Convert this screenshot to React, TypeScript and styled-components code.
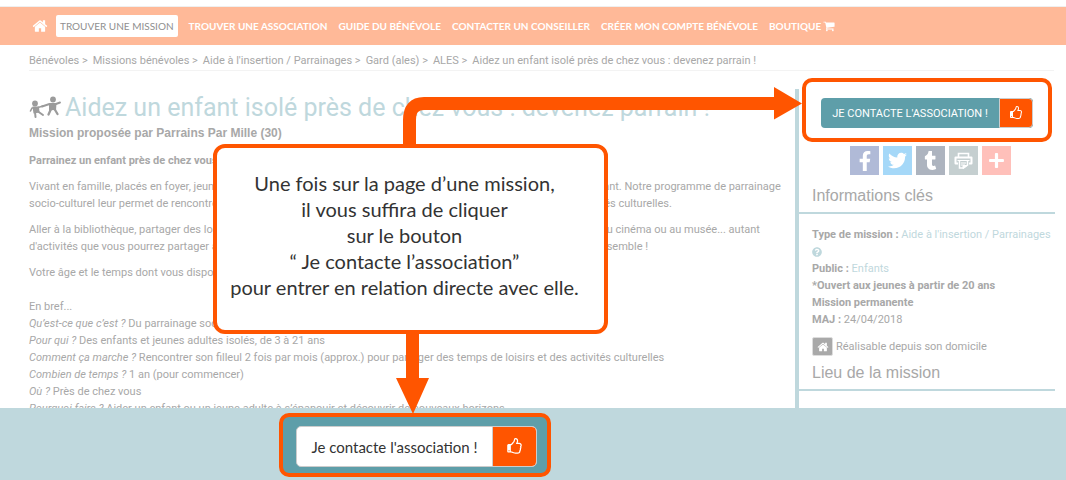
import React from "react";
import styled, { createGlobalStyle } from "styled-components";
import { FaFacebookF, FaTwitter, FaTumblr, FaPlus, FaQuestionCircle } from "react-icons/fa";

const ORANGE = "#ff5500";
const TEAL = "#5e9ea9";
const PALE_TEAL = "#bfd8dd";
const GREY = "#a8a8a8";
const LATO = `Lato, "Open Sans", sans-serif`;
const ROBOTO = `Roboto, "Open Sans", sans-serif`;
const ARIAL = `"Liberation Sans", Arial, sans-serif`;

const GlobalStyle = createGlobalStyle`
  *, *::before, *::after { box-sizing: border-box; }
  body { margin: 0; background: #fff; }
  a { color: inherit; text-decoration: none; }
  button { cursor: pointer; }
`;

const Page = styled.div`
  position: relative;
  display: flex;
  flex-direction: column;
  height: 100vh;
  overflow: hidden;
  font: 11px/17px ${ROBOTO};
  color: ${GREY};
`;

const NavBar = styled.nav`
  flex: none;
  display: flex;
  align-items: center;
  gap: 3px;
  height: 39px;
  margin-top: 6px;
  padding: 0 28px;
  border-top: 1px solid #efefef;
  background: #ffb998;
`;

const NavLink = styled.a<{ $active?: boolean }>`
  display: inline-flex;
  align-items: center;
  gap: 2px;
  height: 22px;
  margin: 0 ${(p) => (p.$active ? 4 : 0)}px 0 0;
  padding: 0 4px;
  border-radius: 2px;
  font-family: ${LATO};
  font-size: 10px;
  font-weight: ${(p) => (p.$active ? 400 : 700)};
  color: ${(p) => (p.$active ? "#8f8f8f" : "#fff")};
  background: ${(p) => (p.$active ? "#fff" : "transparent")};
  white-space: nowrap;
`;

const HomeLink = styled(NavLink)`
  margin-right: 1px;
`;

const Breadcrumb = styled.nav`
  flex: none;
  display: flex;
  gap: 5px;
  height: 26px;
  margin: 0 12px 0 29px;
  padding-top: 7px;
  border-bottom: 1px solid #f3f3f3;
  white-space: nowrap;
`;

const Main = styled.main`
  flex: 1;
  min-height: 0;
  display: flex;
  margin-top: 18px;
  padding: 0 11px 0 29px;
`;

const Article = styled.article`
  flex: 1;
  min-width: 0;
  white-space: nowrap;

  p { margin: 0 0 9px; }
`;

const TitleRow = styled.div`
  display: flex;
  align-items: center;
  gap: 4px;
  height: 36px;
`;

const Title = styled.h1`
  margin: 0;
  padding-top: 2px;
  font: 400 25px/36px ${ROBOTO};
  color: ${PALE_TEAL};
`;

const Proposer = styled.h2`
  margin: 0 0 10px;
  font: 700 12px/17px ${ARIAL};
`;

const Aside = styled.aside`
  flex: none;
  width: 260px;
  border-left: 4px solid ${PALE_TEAL};
`;

const ContactFrame = styled.div`
  position: relative;
  width: 212px;
  margin: 9px 0 0 22px;

  &::after {
    content: "";
    position: absolute;
    inset: -20px -19px -14px -19px;
    border: 4px solid ${ORANGE};
    border-radius: 10px;
    pointer-events: none;
  }
`;

const ContactButton = styled.button`
  display: flex;
  width: 100%;
  height: 30px;
  padding: 0;
  border: 0;
  border-radius: 4px;
  overflow: hidden;
  background: ${TEAL};
  color: #fff;
  font: 11px/32px ${ROBOTO};
`;

const ContactLabel = styled.span`
  flex: 1;
  white-space: nowrap;
`;

const ThumbCell = styled.span<{ $width: number }>`
  flex: none;
  display: flex;
  align-items: center;
  justify-content: center;
  width: ${(p) => p.$width}px;
  height: 100%;
  border: 1px solid #ccc;
  border-radius: 0 4px 4px 0;
  background: ${ORANGE};
  color: #fff;
`;

const ShareRow = styled.div`
  display: flex;
  gap: 4px;
  margin: 18px 0 0 51px;
`;

const ShareLink = styled.a<{ $color: string }>`
  display: flex;
  align-items: center;
  justify-content: center;
  width: 29px;
  height: 29px;
  background: ${(p) => p.$color};
  color: #fff;
`;

const SectionTitle = styled.h3`
  margin: 0;
  padding: 9px 0 4px 13px;
  border-bottom: 2px solid ${PALE_TEAL};
  font: 400 16px/24px ${ARIAL};
`;

const Facts = styled.div`
  padding: 12px 0 0 13px;
  white-space: nowrap;
`;

const FactLink = styled.a`
  color: ${PALE_TEAL};
`;

const HelpLine = styled.div`
  display: flex;
  align-items: center;
  height: 17px;
  color: ${PALE_TEAL};
`;

const HomeFact = styled.div`
  display: flex;
  align-items: center;
  gap: 3px;
  margin-top: 9px;
`;

const HomeBadge = styled.span`
  display: flex;
  align-items: center;
  justify-content: center;
  width: 21px;
  height: 19px;
  border: 1px solid #ddd;
  border-radius: 2px;
  background: #a9a9a9;
  color: #fff;
`;

const LocationTitle = styled(SectionTitle)`
  padding-top: 5px;
`;

const Footer = styled.footer`
  flex: none;
  height: 72px;
  padding: 5px 0 0 279px;
  background: ${PALE_TEAL};
`;

const FooterFrame = styled.div`
  width: 272px;
  height: 64px;
  padding: 9px 10px 0 13px;
  border: 4px solid ${ORANGE};
  border-radius: 10px;
  background: ${TEAL};
`;

const FooterButton = styled.button`
  display: flex;
  width: 241px;
  height: 41px;
  padding: 0;
  border: 1px solid #ccc;
  border-radius: 5px;
  overflow: hidden;
  background: #fff;
  color: #333;
  font: 15px/40px ${LATO};

  ${ThumbCell} { border-width: 0 0 0 1px; }
`;

const Callout = styled.div`
  position: absolute;
  left: 213px;
  top: 144px;
  width: 395px;
  height: 190px;
  padding: 22px 12px 0 0;
  border: 4px solid ${ORANGE};
  border-radius: 12px;
  background: #fff;
  color: #333;
  font: 20px/26px ${LATO};
  text-align: center;
  white-space: nowrap;
`;

const Arrows = styled.svg`
  position: absolute;
  left: 0;
  top: 0;
  pointer-events: none;
`;

type IconProps = { size: number };

const HomeIcon = ({ size }: IconProps) => (
  <svg width={size} height={size} viewBox="0 0 1792 1792" fill="currentColor" aria-hidden="true">
    <path d="M1472 992v480q0 26-19 45t-45 19h-384v-384h-256v384h-384q-26 0-45-19t-19-45v-480q0-1 .5-3t.5-3l575-474 575 474q1 2 1 6zm223-69l-62 74q-8 9-21 11h-3q-13 0-21-7l-692-577-692 577q-12 8-24 7-13-2-21-11l-62-74q-8-10-7-23.5t11-21.5l719-599q32-26 76-26t76 26l244 204v-195q0-14 9-23t23-9h192q14 0 23 9t9 23v408l219 182q10 8 11 21.5t-7 23.5z" />
  </svg>
);

const CartIcon = ({ size }: IconProps) => (
  <svg width={size} height={size} viewBox="0 0 1792 1792" fill="currentColor" aria-hidden="true">
    <path d="M704 1536q0 52-38 90t-90 38-90-38-38-90 38-90 90-38 90 38 38 90zm896 0q0 52-38 90t-90 38-90-38-38-90 38-90 90-38 90 38 38 90zm128-1088v512q0 24-16.500 42.500t-40.500 21.500l-1044 122q13 60 13 70 0 16-24 64h920q26 0 45 19t19 45-19 45-45 19h-1024q-26 0-45-19t-19-45q0-11 8-31.500t16-36 21.500-40 15.500-29.500l-177-823h-204q-26 0-45-19t-19-45 19-45 45-19h256q16 0 28.500 6.500t19.500 15.500 13 24.500 8 26 5.500 29.500 4.500 26h1201q26 0 45 19t19 45z" />
  </svg>
);

const ThumbIcon = ({ size }: IconProps) => (
  <svg width={size} height={size} viewBox="0 0 1792 1792" fill="currentColor" aria-hidden="true">
    <path d="M384 1344q0-26-19-45t-45-19-45 19-19 45 19 45 45 19 45-19 19-45zm1152-576q0-51-39-89.500t-89-38.500h-352q0-58 48-159.500t48-160.500q0-98-32-145t-128-47q-26 26-38 85t-30.500 125.500-59.500 109.500q-22 23-77 91-4 5-23 30t-31.500 41-34.500 42.500-40 44-38.500 35.500-40 27-35.500 9h-32v640h32q13 0 31.500 3t33 6.500 38 11 35 11.500 35.500 12.500 29 10.500q211 73 342 73h121q192 0 192-167 0-26-5-56 30-16 47.500-52.500t17.500-73.500-18-69q53-50 53-119 0-25-10-55.500t-25-47.500q32-1 53.500-47t21.500-81zm128-1q0 89-49 163 9 33 9 69 0 77-38 144 3 21 3 43 0 101-60 178 1 139-85 219.500t-227 80.500h-129q-96 0-189.500-22.500t-216.500-65.500q-116-40-138-40h-288q-53 0-90.500-37.500t-37.500-90.500v-640q0-53 37.500-90.500t90.500-37.500h274q36-24 137-155 58-75 107-128 24-25 35.500-85.500t30.500-126.500 62-108q39-37 90-37 84 0 151 32.500t102 101.500 35 186q0 93-48 192h176q104 0 180 76t76 179z" />
  </svg>
);

const PrinterIcon = () => (
  <svg width="19" height="18" viewBox="0 0 19 18" fill="none" stroke="currentColor" aria-hidden="true">
    <path d="M4.500 5V1.500h10V5" strokeWidth="1.600" />
    <path d="M4 11.500H1.500V5.500h16v6H15" strokeWidth="2" strokeLinejoin="round" />
    <path d="M3.500 8.500h12" strokeWidth="1" />
    <path d="M5.500 9v7h4l4-3V9" strokeWidth="1.500" />
    <path d="M7 11h5M7 13h4" strokeWidth="1" />
    <path d="M9 16.500v-3h4z" fill="currentColor" strokeWidth="1" />
  </svg>
);

const ChildrenLogo = () => (
  <svg width="32" height="24" viewBox="0 0 32 24" fill="none" stroke="#9b9b9b" strokeLinecap="round" strokeLinejoin="round" aria-hidden="true">
    <g fill="#9b9b9b" stroke="none">
      <circle cx="6" cy="8.500" r="2.900" />
      <circle cx="24" cy="4.500" r="2.900" />
      <path d="M20 8h7.500l-.5 7.500-3-.5-4 1z" />
      <path d="M3.500 11.500H10l.5 6-6 1z" />
    </g>
    <path d="M13 11.500L20.500 9H27l4-1.500" strokeWidth="1.900" />
    <path d="M22 14l-2.500 5.500M25.500 14l3 5" strokeWidth="2.300" />
    <path d="M1.500 16L3 13l6-.5 5-1.500" strokeWidth="1.600" />
    <path d="M6 17l.5 5M9 16.500l5 3.500" strokeWidth="2" />
  </svg>
);

export default function App() {
  return (
    <Page>
      <GlobalStyle />
      <NavBar aria-label="Navigation principale">
        <HomeLink href="#accueil" aria-label="Accueil"><HomeIcon size={16} /></HomeLink>
        <NavLink href="#missions" $active>TROUVER UNE MISSION</NavLink>
        <NavLink href="#associations">TROUVER UNE ASSOCIATION</NavLink>
        <NavLink href="#guide">GUIDE DU BÉNÉVOLE</NavLink>
        <NavLink href="#conseiller">CONTACTER UN CONSEILLER</NavLink>
        <NavLink href="#compte">CRÉER MON COMPTE BÉNÉVOLE</NavLink>
        <NavLink href="#boutique">BOUTIQUE <CartIcon size={12} /></NavLink>
      </NavBar>
      <Breadcrumb aria-label="Fil d'Ariane">
        <a href="#b1">Bénévoles &gt;</a>
        <a href="#b2">Missions bénévoles &gt;</a>
        <a href="#b3">Aide à l'insertion / Parrainages &gt;</a>
        <a href="#b4">Gard (ales) &gt;</a>
        <a href="#b5">ALES &gt;</a>
        <span>Aidez un enfant isolé près de chez vous : devenez parrain !</span>
      </Breadcrumb>
      <Main>
        <Article>
          <TitleRow>
            <ChildrenLogo />
            <Title>Aidez un enfant isolé près de chez vous : devenez parrain !</Title>
          </TitleRow>
          <Proposer>Mission proposée par Parrains Par Mille (30)</Proposer>
          <p><b>Parrainez un enfant près de chez vous !</b></p>
          <p>
            Vivant en famille, placés en foyer, jeunes mineurs isolés : tous ont besoin d'être entourés par un adulte qui est bienveillant. Notre programme de parrainage<br />
            socio-culturel leur permet de rencontrer un parrain ou une marraine avec qui partager des sorties, un livre et des activités culturelles.
          </p>
          <p>
            Aller à la bibliothèque, partager des loisirs, faire du sport, danser, cuisiner, se promener en forêt, visiter une expo, aller au cinéma ou au musée... autant<br />
            d'activités que vous pourrez partager avec votre filleul, selon vos envies et les siennes, pour bien grandir et s'enrichir ensemble !
          </p>
          <p>
            Votre âge et le temps dont vous disposez importent peu.<br />
            <br />
            En bref...<br />
            <i>Qu’est-ce que c’est ?</i> Du parrainage socio-culturel de proximité<br />
            <i>Pour qui ?</i> Des enfants et jeunes adultes isolés, de 3 à 21 ans<br />
            <i>Comment ça marche ?</i> Rencontrer son filleul 2 fois par mois (approx.) pour partager des temps de loisirs et des activités culturelles<br />
            <i>Combien de temps ?</i> 1 an (pour commencer)<br />
            <i>Où ?</i> Près de chez vous<br />
            <i>Pourquoi faire ?</i> Aider un enfant ou un jeune adulte à s’épanouir et découvrir de nouveaux horizons
          </p>
        </Article>
        <Aside>
          <ContactFrame>
            <ContactButton type="button">
              <ContactLabel>JE CONTACTE L'ASSOCIATION !</ContactLabel>
              <ThumbCell $width={34}><ThumbIcon size={14} /></ThumbCell>
            </ContactButton>
          </ContactFrame>
          <ShareRow>
            <ShareLink href="#facebook" aria-label="Facebook" $color="#b0bad7"><FaFacebookF size={20} /></ShareLink>
            <ShareLink href="#twitter" aria-label="Twitter" $color="#a5d8f8"><FaTwitter size={19} /></ShareLink>
            <ShareLink href="#tumblr" aria-label="Tumblr" $color="#adb4bf"><FaTumblr size={19} /></ShareLink>
            <ShareLink href="#imprimer" aria-label="Imprimer" $color="#c5cfd0"><PrinterIcon /></ShareLink>
            <ShareLink href="#plus" aria-label="Plus" $color="#ffc0ba"><FaPlus size={17} /></ShareLink>
          </ShareRow>
          <SectionTitle>Informations clés</SectionTitle>
          <Facts>
            <div><b>Type de mission :</b> <FactLink href="#type">Aide à l'insertion / Parrainages</FactLink></div>
            <HelpLine><FaQuestionCircle size={10} /></HelpLine>
            <div><b>Public :</b> <FactLink href="#public">Enfants</FactLink></div>
            <div><b>*Ouvert aux jeunes à partir de 20 ans</b></div>
            <div><b>Mission permanente</b></div>
            <div><b>MAJ :</b> 24/04/2018</div>
            <HomeFact><HomeBadge><HomeIcon size={12} /></HomeBadge>Réalisable depuis son domicile</HomeFact>
          </Facts>
          <LocationTitle>Lieu de la mission</LocationTitle>
        </Aside>
      </Main>
      <Footer>
        <FooterFrame>
          <FooterButton type="button">
            <ContactLabel>Je contacte l'association !</ContactLabel>
            <ThumbCell $width={44}><ThumbIcon size={17} /></ThumbCell>
          </FooterButton>
        </FooterFrame>
      </Footer>
      <Arrows width="1066" height="480" viewBox="0 0 1066 480" aria-hidden="true">
        <path d="M409.500 150V120Q409.500 103.500 424 103.500H776" fill="none" stroke={ORANGE} strokeWidth="13" />
        <path d="M774 87L802 103.500L774 119.500Z" fill={ORANGE} />
        <path d="M406 330H419V378H429L413 414L396 378H406Z" fill={ORANGE} />
      </Arrows>
      <Callout>
        Une fois sur la page d’une mission,<br />
        il vous suffira de cliquer<br />
        sur le bouton<br />
        “ Je contacte l’association”<br />
        pour entrer en relation directe avec elle.
      </Callout>
    </Page>
  );
}
